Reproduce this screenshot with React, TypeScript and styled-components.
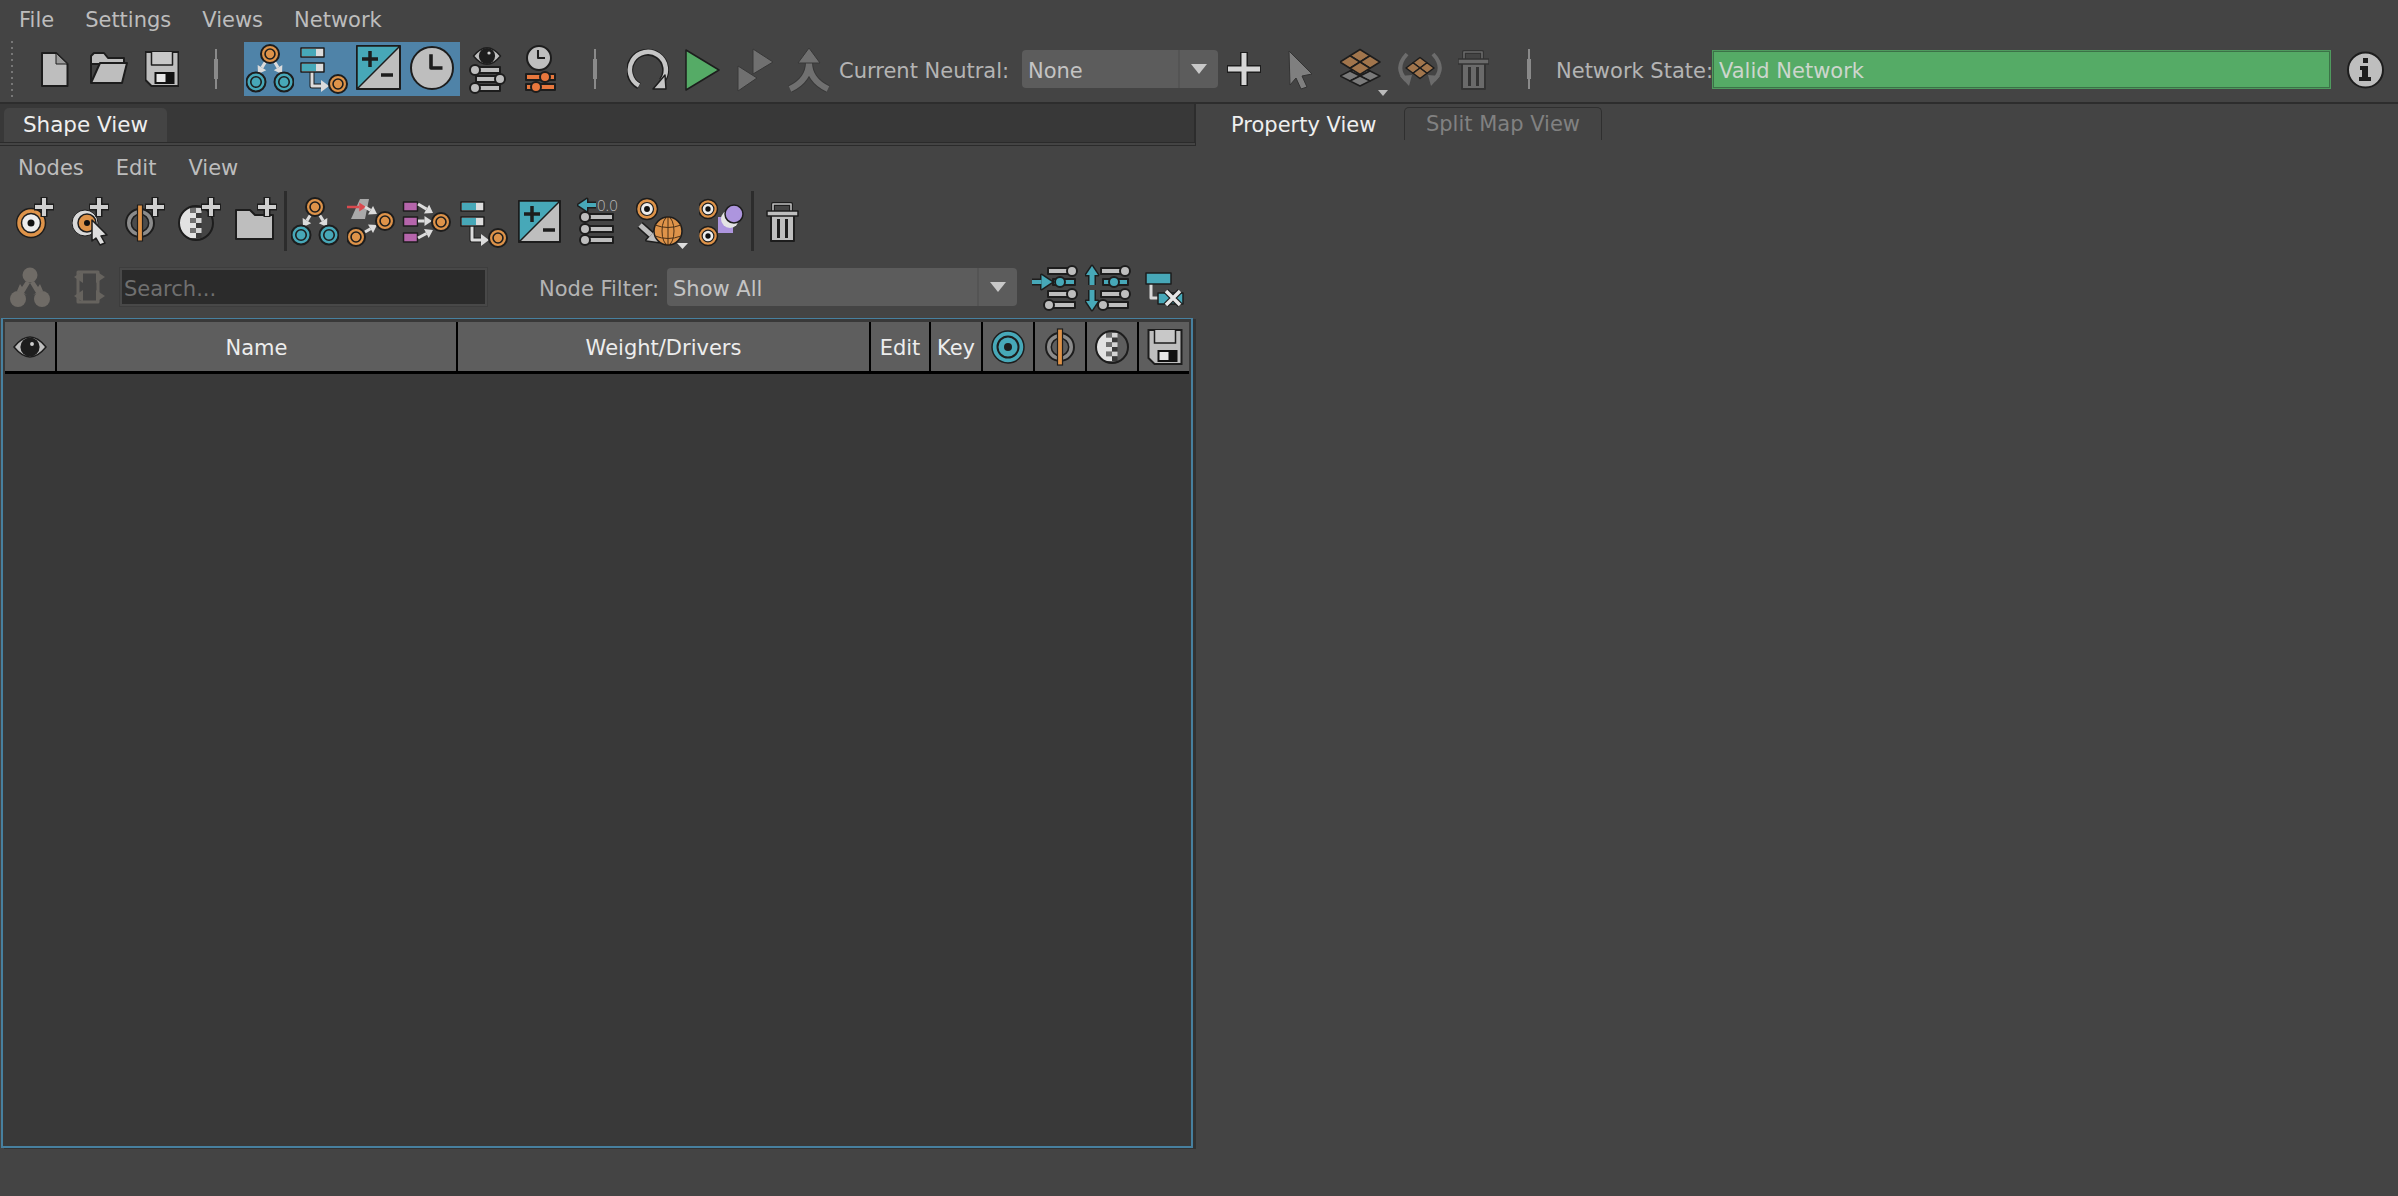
import React from "react";
import styled, { createGlobalStyle } from "styled-components";

const FONT = `"DejaVu Sans", "Open Sans", sans-serif`;
const DARK = "#1d1d1d";
const LIGHT = "#bebebe";
const ORANGE = "#de9349";
const TEAL = "#47a8b8";
const PURPLE = "#b565ab";
const LAVENDER = "#ad95de";
const OFF = "#707070";

const GlobalStyle = createGlobalStyle`
  html, body {
    margin: 0;
    padding: 0;
    background: #444444;
    font-family: ${FONT};
  }
`;

const Page = styled.div`
  width: 2398px;
  height: 1196px;
  display: flex;
  flex-direction: column;
  background: #444444;
  color: #bcbcbc;
  font-size: 21px;
  overflow: hidden;
`;

const MenuBar = styled.div<{ $h: number; $pl: number; $gap: number; $pt: number }>`
  display: flex;
  align-items: center;
  box-sizing: border-box;
  height: ${(p) => p.$h}px;
  padding-left: ${(p) => p.$pl}px;
  padding-top: ${(p) => p.$pt}px;
  gap: ${(p) => p.$gap}px;
  flex: none;
`;

const MenuItem = styled.span`
  color: #bdbdbd;
`;

const MainToolbar = styled.div`
  display: flex;
  align-items: center;
  height: 66px;
  flex: none;
  border-bottom: 2px solid #2d2d2d;
`;

const Grip = styled.div`
  width: 8px;
  height: 60px;
  margin-left: 9px;
  flex: none;
  background-image: radial-gradient(circle, #777 1px, transparent 1.2px);
  background-size: 6px 6px;
`;

const Separator = styled.div<{ $ml: number }>`
  width: 4px;
  height: 40px;
  margin-left: ${(p) => p.$ml}px;
  flex: none;
  background: linear-gradient(#8a8a8a, #8a8a8a) center / 2px 100% no-repeat,
    linear-gradient(#8a8a8a, #8a8a8a) center / 100% 50% no-repeat;
`;

const GroupRule = styled.div<{ $ml: number }>`
  width: 3px;
  height: 60px;
  margin-left: ${(p) => p.$ml}px;
  flex: none;
  background: #2c2c2c;
`;

const ActiveGroup = styled.div`
  display: flex;
  margin-left: 26px;
  width: 216px;
  height: 54px;
  background: #4f83a8;
  flex: none;
`;

const IconSvg = styled.svg<{ $ml: number }>`
  display: block;
  flex: none;
  margin-left: ${(p) => p.$ml}px;
`;

const Label = styled.span<{ $ml?: number; $w: number }>`
  margin-left: ${(p) => p.$ml ?? 0}px;
  width: ${(p) => p.$w}px;
  padding-top: 3px;
  flex: none;
  color: #b4b4b4;
  white-space: nowrap;
`;

const Combo = styled.div<{ $ml?: number; $w: number }>`
  display: flex;
  align-items: center;
  width: ${(p) => p.$w}px;
  height: 38px;
  margin-left: ${(p) => p.$ml ?? 0}px;
  flex: none;
  box-sizing: border-box;
  padding-left: 6px;
  background: #5c5c5c;
  border-radius: 4px;
  color: #c4c4c4;
`;

const ComboText = styled.span`
  flex: 1;
  padding-top: 3px;
`;

const ComboArrow = styled.div`
  width: 40px;
  height: 100%;
  flex: none;
  display: flex;
  align-items: center;
  justify-content: center;
  border-left: 2px solid #545454;
  box-sizing: border-box;
  &::after {
    content: "";
    border-left: 8px solid transparent;
    border-right: 8px solid transparent;
    border-top: 10px solid #c8c8c8;
  }
`;

const StateField = styled.div`
  width: 617px;
  height: 37px;
  margin-left: 3px;
  flex: none;
  box-sizing: border-box;
  padding: 3px 0 0 5px;
  display: flex;
  align-items: center;
  background: #55ab66;
  border: 1px solid #3b7247;
  outline: 1px solid #4f9a5e;
  color: #cdd6cd;
`;

const Body = styled.div`
  display: flex;
  flex: 1;
  min-height: 0;
`;

const LeftColumn = styled.div`
  width: 1196px;
  flex: none;
  display: flex;
  flex-direction: column;
  margin-bottom: 48px;
`;

const TabStrip = styled.div`
  height: 38px;
  flex: none;
  box-sizing: border-box;
  padding: 4px 0 0 4px;
  background: #383838;
  border-right: 2px solid #2d2d2d;
`;

const ActiveTab = styled.div`
  width: 163px;
  height: 34px;
  display: flex;
  align-items: center;
  justify-content: center;
  box-sizing: border-box;
  padding-bottom: 2px;
  background: #444444;
  border-radius: 5px 5px 0 0;
  color: #efefef;
  font-size: 21.5px;
`;

const TabRule = styled.div`
  height: 4px;
  flex: none;
  box-sizing: border-box;
  background: #444444;
  border: 1px solid #2b2b2b;
  border-left: 0;
`;

const ToolRow = styled.div`
  display: flex;
  align-items: center;
  height: 66px;
  flex: none;
`;

const FilterRow = styled.div`
  display: flex;
  align-items: center;
  height: 64px;
  padding-top: 2px;
  box-sizing: border-box;
  flex: none;
`;

const SearchBox = styled.div`
  width: 367px;
  height: 38px;
  margin-left: 14px;
  flex: none;
  box-sizing: border-box;
  padding: 3px 0 0 2px;
  display: flex;
  align-items: center;
  background: #2b2b2b;
  border: 2px solid #484848;
  outline: 1px solid #3d3d3d;
  color: #6f6f6f;
`;

const PanelFrame = styled.div`
  flex: 1;
  margin-left: 1px;
  margin-right: 3px;
  box-sizing: border-box;
  padding: 3px 2px 0 2px;
  background: #393939;
  border: 2px solid #47809f;
  border-top-width: 1px;
  box-shadow: 3px 1px 0 #323232;
  min-height: 0;
`;

const HeaderRow = styled.div`
  display: grid;
  grid-template-columns: 52px 401px 413px 60px 52px 52px 52px 52px 51px;
  height: 52px;
  box-sizing: border-box;
  background: #5e5e5e;
  border-bottom: 3px solid #000000;
  color: #ededed;
`;

const HeaderCell = styled.div`
  display: flex;
  align-items: center;
  justify-content: center;
  box-sizing: border-box;
  border-right: 2px solid #000000;
  &:last-child {
    border-right: 0;
  }
`;

const HeaderText = styled.span`
  padding-top: 2px;
`;

const RightColumn = styled.div`
  flex: 1;
  min-width: 0;
`;

const RightTabs = styled.div`
  display: flex;
  height: 38px;
  padding: 3px 0 0 35px;
  box-sizing: border-box;
`;

const PlainTab = styled.div`
  display: flex;
  align-items: center;
  width: 173px;
  height: 33px;
  padding-top: 1px;
  flex: none;
  color: #efefef;
`;

const MutedTab = styled.div`
  display: flex;
  align-items: center;
  justify-content: center;
  width: 198px;
  height: 33px;
  flex: none;
  box-sizing: border-box;
  border: 1px solid #2f2f2f;
  border-bottom: 0;
  border-radius: 5px 5px 0 0;
  color: #818181;
`;

/* svg helpers: every icon uses the coordinates measured on the page */

type IconProps = { x: number; w: number; y: number; h: number; ml?: number; children: React.ReactNode };

const Icon = ({ x, w, y, h, ml = 0, children }: IconProps) => (
  <IconSvg $ml={ml} width={w} height={h} viewBox={`${x} ${y} ${w} ${h}`} strokeLinejoin="round">
    {children}
  </IconSvg>
);

const Node = ({ x, y, r = 9, c = ORANGE }: { x: number; y: number; r?: number; c?: string }) => (
  <g fill={c} stroke={DARK}>
    <circle cx={x} cy={y} r={r} strokeWidth={2} />
    <circle cx={x} cy={y} r={r * 0.55} strokeWidth={1.6} />
  </g>
);

const EyeNode = ({ x, y, r = 9.5 }: { x: number; y: number; r?: number }) => (
  <g stroke={DARK}>
    <circle cx={x} cy={y} r={r} fill={ORANGE} strokeWidth={1.5} />
    <circle cx={x} cy={y} r={r * 0.62} fill="#ececec" strokeWidth={1.2} />
    <circle cx={x} cy={y} r={r * 0.28} fill="#111" stroke="none" />
  </g>
);

type ArrowProps = { x1: number; y1: number; x2: number; y2: number; c?: string; t?: number; s?: number; outlined?: boolean };

const Arrow = ({ x1, y1, x2, y2, c = "#dcdcdc", t = 3, s = 5, outlined = false }: ArrowProps) => {
  const a = Math.atan2(y2 - y1, x2 - x1);
  const bx = x2 - Math.cos(a) * s * 1.5;
  const by = y2 - Math.sin(a) * s * 1.5;
  const nx = -Math.sin(a) * s;
  const ny = Math.cos(a) * s;
  const points = `${x2},${y2} ${bx + nx},${by + ny} ${bx - nx},${by - ny}`;
  return (
    <g>
      {outlined && <line x1={x1} y1={y1} x2={bx} y2={by} stroke={DARK} strokeWidth={t + 3} />}
      {outlined && <polygon points={points} fill={DARK} stroke={DARK} strokeWidth={3} />}
      <line x1={x1} y1={y1} x2={bx} y2={by} stroke={c} strokeWidth={t} />
      <polygon points={points} fill={c} />
    </g>
  );
};

const Plus = ({ x, y, a = 10, t = 4, c = "#cfcfcf" }: { x: number; y: number; a?: number; t?: number; c?: string }) => (
  <g>
    <path d={`M${x - a} ${y}H${x + a}M${x} ${y - a}V${y + a}`} stroke={DARK} strokeWidth={t + 3} />
    <path d={`M${x - a + 1} ${y}H${x + a - 1}M${x} ${y - a + 1}V${y + a - 1}`} stroke={c} strokeWidth={t} />
  </g>
);

const Tree = ({ x, y }: { x: number; y: number }) => (
  <g>
    <Arrow x1={x + 20} y1={y + 17} x2={x + 12} y2={y + 30} />
    <Arrow x1={x + 28} y1={y + 17} x2={x + 36} y2={y + 30} />
    <Node x={x + 24} y={y + 10} />
    <Node x={x + 10} y={y + 38} r={9.5} c={TEAL} />
    <Node x={x + 38} y={y + 38} r={9.5} c={TEAL} />
  </g>
);

const BarsToNode = ({ x, y }: { x: number; y: number }) => (
  <g>
    <path d={`M${x + 11} ${y + 22}V${y + 38}H${x + 24}`} fill="none" stroke={DARK} strokeWidth={5} />
    <path d={`M${x + 11} ${y + 22}V${y + 38}H${x + 24}`} fill="none" stroke="#dcdcdc" strokeWidth={3} />
    <polygon points={`${x + 28},${y + 38} ${x + 20},${y + 32} ${x + 20},${y + 44}`} fill="#dcdcdc" />
    {[0, 15].map((d) => (
      <g key={d}>
        <rect x={x} y={y + d} width={23} height={9} fill="#dcdcdc" stroke={DARK} strokeWidth={1.5} />
        <rect x={x + 1} y={y + d + 1} width={14} height={7} fill={TEAL} />
      </g>
    ))}
    <Node x={x + 37} y={y + 36} />
  </g>
);

const PlusMinus = ({ x, y, s = 43 }: { x: number; y: number; s?: number }) => (
  <g>
    <rect x={x} y={y} width={s} height={s} fill={LIGHT} stroke={DARK} strokeWidth={2} />
    <polygon points={`${x},${y} ${x + s},${y} ${x},${y + s}`} fill={TEAL} stroke={DARK} strokeWidth={1.5} />
    <path d={`M${x + 5} ${y + 13}H${x + 21}M${x + 13} ${y + 5}V${y + 21}`} stroke={DARK} strokeWidth={3.5} />
    <path d={`M${x + 24} ${y + 29}H${x + 36}`} stroke={DARK} strokeWidth={3.5} />
  </g>
);

const Clock = ({ x, y, r }: { x: number; y: number; r: number }) => (
  <g>
    <circle cx={x} cy={y} r={r} fill={LIGHT} stroke={DARK} strokeWidth={2} />
    <path d={`M${x - 1} ${y - r * 0.66}V${y}H${x + r * 0.5}`} fill="none" stroke={DARK} strokeWidth={r * 0.17} />
  </g>
);

const Slider = ({ x1, x2, y, k, c = LIGHT }: { x1: number; x2: number; y: number; k: number; c?: string }) => (
  <g>
    <rect x={x1} y={y - 3} width={x2 - x1} height={6} fill={c} stroke={DARK} strokeWidth={2} />
    <circle cx={k} cy={y} r={5} fill={c} stroke={DARK} strokeWidth={2} />
  </g>
);

const EyeShape = ({ x, y, w }: { x: number; y: number; w: number }) => (
  <g>
    <path
      d={`M${x - w / 2} ${y}Q${x} ${y - w * 0.62} ${x + w / 2} ${y}Q${x} ${y + w * 0.62} ${x - w / 2} ${y}Z`}
      fill={LIGHT}
      stroke={DARK}
      strokeWidth={1.5}
    />
    <circle cx={x} cy={y} r={w * 0.3} fill={DARK} />
    <circle cx={x + 2} cy={y - 3} r={w * 0.06} fill="#d0d0d0" />
  </g>
);

const Floppy = ({ x, y }: { x: number; y: number }) => (
  <g>
    <path
      d={`M${x} ${y}H${x + 33}V${y + 34}H${x + 6}L${x} ${y + 28}Z`}
      fill={LIGHT}
      stroke={DARK}
      strokeWidth={2}
    />
    <path d={`M${x + 6} ${y}V${y + 13}H${x + 27}V${y}`} fill="#c8c8c8" stroke={DARK} strokeWidth={1.5} />
    <rect x={x + 9} y={y + 20} width={20} height={12} fill="#111" />
    <rect x={x + 11} y={y + 22} width={9} height={8} fill="#e8e8e8" />
  </g>
);

const Trash = ({ x, y, c = LIGHT, line = DARK }: { x: number; y: number; c?: string; line?: string }) => (
  <g>
    <path d={`M${x + 6} ${y + 8}V${y + 1}H${x + 24}V${y + 8}`} fill="none" stroke={line} strokeWidth={4} />
    <path d={`M${x + 6} ${y + 8}V${y + 1}H${x + 24}V${y + 8}`} fill="none" stroke={c} strokeWidth={1.6} />
    <rect x={x + 4} y={y + 12} width={23} height={26} fill={c} stroke={line} strokeWidth={2} />
    <rect x={x} y={y + 8} width={31} height={5} fill={c} stroke={line} strokeWidth={1.5} />
    <rect x={x + 10} y={y + 16} width={3} height={19} fill={line} />
    <rect x={x + 18} y={y + 16} width={3} height={19} fill={line} />
  </g>
);

/* hw / hh are half the size of the whole diamond of four tiles */
const Tiles = ({ x, y, hw, hh, c }: { x: number; y: number; hw: number; hh: number; c: string }) => (
  <g fill={c} stroke={DARK} strokeWidth={1.5}>
    {[
      [0, -hh / 2],
      [-hw / 2, 0],
      [hw / 2, 0],
      [0, hh / 2],
    ].map(([dx, dy]) => (
      <polygon
        key={`${dx}${dy}`}
        points={`${x + dx},${y + dy - hh / 2} ${x + dx + hw / 2},${y + dy} ${x + dx},${y + dy + hh / 2} ${x + dx - hw / 2},${y + dy}`}
      />
    ))}
  </g>
);

const SplitRing = ({ x, y, r = 14, lit = false }: { x: number; y: number; r?: number; lit?: boolean }) => (
  <g>
    <circle cx={x} cy={y} r={r} fill="#8b8b8b" stroke={DARK} strokeWidth={2} />
    <circle cx={x} cy={y} r={r * 0.62} fill={lit ? "#5e5e5e" : "#4b4b4b"} stroke={DARK} strokeWidth={1.5} />
    <rect x={x - 2.5} y={y - r - 4} width={5} height={2 * r + 8} fill={ORANGE} stroke={DARK} strokeWidth={1.2} />
  </g>
);

/* left half light, then two stepped columns of small blocks */
const HalfDisc = ({ x, y, r, back = "#444444" }: { x: number; y: number; r: number; back?: string }) => (
  <g>
    <circle cx={x} cy={y} r={r} fill={back} />
    <path
      d={`M${x - 6} ${y - Math.sqrt(r * r - 36)}A${r} ${r} 0 0 0 ${x - 6} ${y + Math.sqrt(r * r - 36)}Z`}
      fill="#e2e2e2"
    />
    {[0, 1, 2, 3, 4, 5].map((i) => (
      <g key={i}>
        <rect x={x - 6} y={y - r + 2 + i * ((2 * r - 4) / 6)} width={6} height={(2 * r - 4) / 6} fill={i % 2 ? "#e2e2e2" : "#707070"} />
        <rect x={x} y={y - r + 2 + i * ((2 * r - 4) / 6)} width={5.5} height={(2 * r - 4) / 6} fill={i % 2 ? "#3a3a3a" : "#d4d4d4"} />
      </g>
    ))}
    <circle cx={x} cy={y} r={r} fill="none" stroke={DARK} strokeWidth={2} />
  </g>
);

const App: React.FC = () => (
  <Page>
    <GlobalStyle />
    <MenuBar $h={36} $pl={19} $gap={31} $pt={3}>
      <MenuItem>File</MenuItem>
      <MenuItem>Settings</MenuItem>
      <MenuItem>Views</MenuItem>
      <MenuItem>Network</MenuItem>
    </MenuBar>

    <MainToolbar>
      <Grip />
      <Icon x={41} w={28} y={36} h={66} ml={24}>
        <polygon points="42,53 56,53 67.5,64 67.5,86 42,86" fill={LIGHT} stroke={DARK} strokeWidth={2} />
        <polygon points="56,53 56,64 67.5,64" fill="#9c9c9c" stroke={DARK} strokeWidth={1} />
      </Icon>
      <Icon x={90} w={38} y={36} h={66} ml={21}>
        <path d="M91 83V56L94 53H104L108 58H124V64H91" fill={LIGHT} stroke={DARK} strokeWidth={2} />
        <polygon points="100,63 127,63 122,83 91,83" fill={LIGHT} stroke={DARK} strokeWidth={2} />
      </Icon>
      <Icon x={145} w={34} y={36} h={66} ml={17}>
        <Floppy x={145.5} y={52} />
      </Icon>
      <Separator $ml={35} />
      <ActiveGroup>
        <Icon x={246} w={48} y={44} h={54} ml={2}>
          <Tree x={246} y={46} />
        </Icon>
        <Icon x={300} w={48} y={44} h={54} ml={6}>
          <BarsToNode x={301} y={50} />
        </Icon>
        <Icon x={356} w={45} y={44} h={54} ml={8}>
          <PlusMinus x={357} y={48} />
        </Icon>
        <Icon x={410} w={45} y={44} h={54} ml={9}>
          <Clock x={432} y={70} r={21} />
        </Icon>
      </ActiveGroup>
      <Icon x={468} w={38} y={36} h={66} ml={8}>
        <EyeShape x={487} y={56} w={27} />
        <Slider x1={478} x2={500} y={70} k={475} />
        <Slider x1={476} x2={497} y={79} k={500} />
        <Slider x1={478} x2={500} y={88} k={475} />
      </Icon>
      <Icon x={524} w={33} y={36} h={66} ml={18}>
        <Clock x={539} y={58} r={12} />
        <Slider x1={526} x2={555} y={77} k={545} c="#e8773d" />
        <Slider x1={526} x2={555} y={87} k={536} c="#e8773d" />
      </Icon>
      <Separator $ml={36} />
      <Icon x={627} w={42} y={36} h={66} ml={30}>
        <path d="M639 86A18 18 0 1 1 662 81" fill="none" stroke={DARK} strokeWidth={7} />
        <path d="M639 85.5A18 18 0 1 1 662 81" fill="none" stroke="#c6c6c6" strokeWidth={4.5} />
        <polygon points="653,89 666,89 665,75" fill="#c6c6c6" stroke={DARK} strokeWidth={1.5} />
      </Icon>
      <Icon x={685} w={36} y={36} h={66} ml={16}>
        <polygon points="686,50 719,70 686,90" fill="#55ab66" stroke={DARK} strokeWidth={1.5} />
      </Icon>
      <Icon x={737} w={37} y={36} h={66} ml={16}>
        <g fill={OFF} stroke="#383838" strokeWidth={1}>
          <polygon points="753,49 773,62 753,74" />
          <polygon points="738,66 757,78 738,91" />
        </g>
      </Icon>
      <Icon x={788} w={43} y={36} h={66} ml={14}>
        <path d="M790 89Q809 80 809 62M828 89Q809 80 809 62" fill="none" stroke="#383838" strokeWidth={8} />
        <path d="M790 89Q809 80 809 62M828 89Q809 80 809 62" fill="none" stroke={OFF} strokeWidth={6} />
        <polygon points="809,48 798,63 820,63" fill={OFF} stroke="#383838" strokeWidth={1} />
      </Icon>
      <Label $ml={8} $w={183}>Current Neutral:</Label>
      <Combo $w={196}>
        <ComboText>None</ComboText>
        <ComboArrow />
      </Combo>
      <Icon x={1226} w={37} y={36} h={66} ml={8}>
        <Plus x={1244} y={69} a={17} t={5} c="#d6d6d6" />
      </Icon>
      <Icon x={1288} w={26} y={36} h={66} ml={25}>
        <polygon
          points="1289,51 1312,74 1302,76 1307,87 1301,89 1296,78 1290,85"
          fill="#7f7f7f"
          stroke="#333"
          strokeWidth={1}
        />
      </Icon>
      <Icon x={1340} w={48} y={36} h={66} ml={26}>
        <Tiles x={1360} y={76} hw={20} hh={10} c="#7a7a7a" />
        <Tiles x={1360} y={62} hw={20} hh={12.5} c="#a1754c" />
        <polygon points="1378,90 1388,90 1383,96" fill="#bbbbbb" />
      </Icon>
      <Icon x={1398} w={46} y={36} h={66} ml={10}>
        <Tiles x={1420} y={68} hw={14} hh={10.5} c="#a1754c" />
        <g fill="none" stroke="#6c6c6c" strokeWidth={4}>
          <path d="M1407 54Q1394 68 1406 80" />
          <path d="M1433 54Q1446 68 1434 80" />
        </g>
        <polygon points="1400,76 1412,75 1409,86" fill="#6c6c6c" />
        <polygon points="1440,76 1428,75 1431,86" fill="#6c6c6c" />
      </Icon>
      <Icon x={1458} w={31} y={36} h={66} ml={14}>
        <Trash x={1458} y={51} c="#6a6a6a" line="#333333" />
      </Icon>
      <Separator $ml={38} />
      <Label $ml={25} $w={154}>Network State:</Label>
      <StateField>Valid Network</StateField>
      <Icon x={2347} w={37} y={36} h={66} ml={17}>
        <circle cx={2365.5} cy={70} r={17.5} fill={LIGHT} stroke={DARK} strokeWidth={2} />
        <path d="M2363 58h5v5h-5zM2360 66h8v11h3v4h-12v-4h3v-7h-2z" fill={DARK} />
      </Icon>
    </MainToolbar>

    <Body>
      <LeftColumn>
        <TabStrip>
          <ActiveTab>Shape View</ActiveTab>
        </TabStrip>
        <TabRule />
        <MenuBar $h={42} $pl={18} $gap={32} $pt={1}>
          <MenuItem>Nodes</MenuItem>
          <MenuItem>Edit</MenuItem>
          <MenuItem>View</MenuItem>
        </MenuBar>

        <ToolRow>
          <Icon x={16} w={39} y={188} h={66} ml={16}>
            <circle cx={31} cy={223} r={14.5} fill={ORANGE} stroke={DARK} strokeWidth={1.5} />
            <circle cx={31} cy={223} r={9.5} fill="#ececec" stroke={DARK} strokeWidth={1.5} />
            <circle cx={31} cy={223} r={3.5} fill="#111" />
            <Plus x={44} y={207} />
          </Icon>
          <Icon x={72} w={38} y={188} h={66} ml={17}>
            <circle cx={85} cy={223} r={13} fill="#d9d9d9" stroke={DARK} strokeWidth={1} />
            <circle cx={87} cy={223} r={9} fill={ORANGE} stroke={DARK} strokeWidth={1.5} />
            <circle cx={87} cy={223} r={3} fill="#111" />
            <Plus x={99} y={207} />
            <polygon points="92,220 107,235 101,236 105,243 100,245 96,238 92,241" fill="#dedede" stroke={DARK} strokeWidth={1.5} />
          </Icon>
          <Icon x={125} w={42} y={188} h={66} ml={15}>
            <SplitRing x={140} y={223} />
            <Plus x={155} y={207} />
          </Icon>
          <Icon x={178} w={44} y={188} h={66} ml={11}>
            <HalfDisc x={196} y={223} r={17} />
            <Plus x={211} y={207} />
          </Icon>
          <Icon x={235} w={43} y={188} h={66} ml={13}>
            <path d="M236 239V210H250L255 215H273V239Z" fill={LIGHT} stroke={DARK} strokeWidth={2} />
            <Plus x={267} y={207} />
          </Icon>
          <GroupRule $ml={6} />
          <Icon x={292} w={48} y={188} h={66} ml={4}>
            <Tree x={292} y={197} />
          </Icon>
          <Icon x={348} w={48} y={188} h={66} ml={8}>
            <polygon points="352,219 361,199 370,199 366,219" fill="#a9a9a9" />
            <Arrow x1={348} y1={207} x2={367} y2={207} c="#d94a4f" t={2.5} s={4.5} />
            <Arrow x1={366} y1={207} x2={378} y2={214} />
            <Arrow x1={366} y1={232} x2={378} y2={225} />
            <Node x={386} y={221} />
            <Node x={357} y={237} />
          </Icon>
          <Icon x={403} w={50} y={188} h={66} ml={7}>
            {[202, 217, 233].map((y) => (
              <rect key={y} x={404.5} y={y} width={14} height={9} fill={PURPLE} stroke={DARK} strokeWidth={1.5} />
            ))}
            <Arrow x1={419} y1={204} x2={434} y2={213} />
            <Arrow x1={419} y1={221} x2={433} y2={221} />
            <Arrow x1={419} y1={238} x2={434} y2={230} />
            <Node x={442} y={222} />
          </Icon>
          <Icon x={461} w={48} y={188} h={66} ml={8}>
            <BarsToNode x={462} y={202} />
          </Icon>
          <Icon x={518} w={44} y={188} h={66} ml={9}>
            <PlusMinus x={520} y={201} s={41} />
          </Icon>
          <Icon x={578} w={42} y={188} h={66} ml={16}>
            <Arrow x1={597} y1={205} x2={579} y2={205} c={TEAL} t={4} s={6} outlined />
            <text x={598} y={211} fontSize={15} fill="#b8b8b8" fontFamily={`"Open Sans", sans-serif`} fontWeight={300}>0.0</text>
            <Slider x1={590} x2={614} y={217} k={586} />
            <Slider x1={590} x2={614} y={229} k={586} />
            <Slider x1={590} x2={614} y={240} k={586} />
          </Icon>
          <Icon x={637} w={52} y={188} h={66} ml={17}>
            <EyeNode x={648} y={209} r={10.5} />
            <Arrow x1={641} y1={225} x2={660} y2={242} c={LIGHT} t={5} s={7} outlined />
            <circle cx={669} cy={231} r={14} fill={ORANGE} stroke={DARK} strokeWidth={1.5} />
            <g fill="none" stroke="#4b3016" strokeWidth={1}>
              <ellipse cx={669} cy={231} rx={6} ry={14} />
              <path d="M656 225Q669 230 682 225M656 236Q669 241 682 236M669 217V245" />
            </g>
            <polygon points="678,243 689,243 683.5,249" fill="#dddddd" />
          </Icon>
          <Icon x={700} w={46} y={188} h={66} ml={11}>
            <EyeNode x={709} y={209} />
            <EyeNode x={709} y={236} />
            <rect x={719} y={217} width={15} height={16} fill={LAVENDER} />
            <circle cx={731} cy={219} r={9} fill="#e4e4e4" />
            <circle cx={735} cy={214} r={9} fill={LAVENDER} stroke={DARK} strokeWidth={1.5} />
          </Icon>
          <GroupRule $ml={6} />
          <Icon x={767} w={33} y={188} h={66} ml={12}>
            <Trash x={768} y={203} />
          </Icon>
        </ToolRow>

        <FilterRow>
          <Icon x={10} w={41} y={256} h={62} ml={10}>
            <g fill="#6f6b66">
              <circle cx={30} cy={275} r={7.5} />
              <circle cx={18} cy={299} r={8} />
              <circle cx={42} cy={299} r={8} />
              <polygon points="26,281 30,283 24,293 27,295 17,291 20,284 22,287" />
              <polygon points="34,281 30,283 36,293 33,295 43,291 40,284 38,287" />
            </g>
          </Icon>
          <Icon x={72} w={34} y={256} h={62} ml={21}>
            <g fill="none" stroke="#66635e" strokeWidth={3}>
              <path d="M78 272H98V302H78Z" />
            </g>
            <g fill="#66635e">
              <polygon points="96,271 105,277 96,283" />
              <polygon points="96,290 105,296 96,302" />
              <polygon points="83,271 74,277 83,283" />
              <polygon points="83,290 74,296 83,302" />
            </g>
          </Icon>
          <SearchBox>Search...</SearchBox>
          <Label $ml={52} $w={128}>Node Filter:</Label>
          <Combo $w={350}>
            <ComboText>Show All</ComboText>
            <ComboArrow />
          </Combo>
          <Icon x={1030} w={48} y={256} h={62} ml={14}>
            <Slider x1={1047} x2={1070} y={271} k={1071} />
            <Slider x1={1052} x2={1074} y={282} k={1059} c={TEAL} />
            <Arrow x1={1031} y1={282} x2={1051} y2={282} c={TEAL} t={4} s={7} outlined />
            <Slider x1={1047} x2={1070} y={294} k={1071} />
            <Slider x1={1050} x2={1074} y={305} k={1048} />
          </Icon>
          <Icon x={1084} w={47} y={256} h={62} ml={6}>
            <Arrow x1={1091} y1={285} x2={1091} y2={266} c={TEAL} t={5} s={6} outlined />
            <Arrow x1={1091} y1={290} x2={1091} y2={310} c={TEAL} t={5} s={6} outlined />
            <Slider x1={1100} x2={1122} y={271} k={1124} />
            <Slider x1={1102} x2={1127} y={282} k={1113} c={TEAL} />
            <Slider x1={1100} x2={1122} y={294} k={1124} />
            <Slider x1={1104} x2={1127} y={305} k={1102} />
          </Icon>
          <Icon x={1144} w={40} y={256} h={62} ml={13}>
            <path d="M1150 284V298H1157" fill="none" stroke="#d8d8d8" strokeWidth={3} />
            <rect x={1145} y={273} width={25} height={11} fill={TEAL} stroke={DARK} strokeWidth={1.5} />
            <rect x={1157} y={293} width={25} height={11} fill={TEAL} stroke={DARK} strokeWidth={1.5} />
            <path d="M1165 291L1179 305M1179 291L1165 305" stroke={DARK} strokeWidth={6} />
            <path d="M1165 291L1179 305M1179 291L1165 305" stroke="#e6e6e6" strokeWidth={3.5} />
          </Icon>
        </FilterRow>

        <PanelFrame>
          <HeaderRow>
            <HeaderCell>
              <svg width={34} height={24} viewBox="15 335 34 24">
                <EyeShape x={32} y={347} w={32} />
              </svg>
            </HeaderCell>
            <HeaderCell><HeaderText>Name</HeaderText></HeaderCell>
            <HeaderCell><HeaderText>Weight/Drivers</HeaderText></HeaderCell>
            <HeaderCell><HeaderText>Edit</HeaderText></HeaderCell>
            <HeaderCell><HeaderText>Key</HeaderText></HeaderCell>
            <HeaderCell>
              <svg width={36} height={36} viewBox="0 0 36 36">
                <circle cx={18} cy={18} r={16} fill={TEAL} stroke={DARK} strokeWidth={1.5} />
                <circle cx={18} cy={18} r={10.5} fill={TEAL} stroke={DARK} strokeWidth={2} />
                <circle cx={18} cy={18} r={4} fill={DARK} />
              </svg>
            </HeaderCell>
            <HeaderCell>
              <svg width={36} height={40} viewBox="1042 328 36 40">
                <SplitRing x={1060} y={348} lit />
              </svg>
            </HeaderCell>
            <HeaderCell>
              <svg width={36} height={36} viewBox="1095 330 36 36">
                <HalfDisc x={1113} y={348} r={16} back="#5e5e5e" />
              </svg>
            </HeaderCell>
            <HeaderCell>
              <svg width={36} height={36} viewBox="1146 330 36 36">
                <Floppy x={1147.5} y={331} />
              </svg>
            </HeaderCell>
          </HeaderRow>
        </PanelFrame>
      </LeftColumn>

      <RightColumn>
        <RightTabs>
          <PlainTab>Property View</PlainTab>
          <MutedTab>Split Map View</MutedTab>
        </RightTabs>
      </RightColumn>
    </Body>
  </Page>
);

export default App;
